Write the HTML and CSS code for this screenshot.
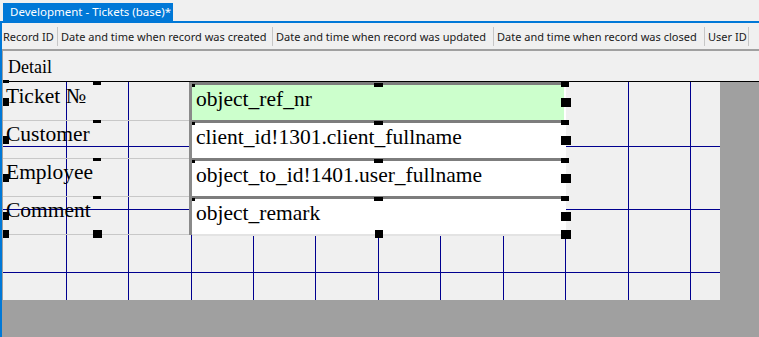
FILE: index.html
```html
<!DOCTYPE html>
<html>
<head>
<meta charset="utf-8">
<link rel="stylesheet" href="styles.css">
</head>
<body>
<div class="tabbar"><div class="tab">Development - Tickets (base)*</div></div>
<div class="window">
  <div class="colhead">
    <div class="col c1">Record ID</div>
    <div class="col c2">Date and time when record was created</div>
    <div class="col c3">Date and time when record was updated</div>
    <div class="col c4">Date and time when record was closed</div>
    <div class="col c5">User ID</div>
  </div>
  <div class="design">
    <div class="band">Detail</div>
    <div class="body">
      <div class="canvas">
        <svg class="grid" width="717" height="218" viewBox="0 0 717 218" shape-rendering="crispEdges">
          <g fill="#00008f">
            <rect x="63" y="0" width="1" height="218"/>
            <rect x="125" y="0" width="1" height="218"/>
            <rect x="188" y="0" width="1" height="218"/>
            <rect x="250" y="0" width="1" height="218"/>
            <rect x="312" y="0" width="1" height="218"/>
            <rect x="375" y="0" width="1" height="218"/>
            <rect x="437" y="0" width="1" height="218"/>
            <rect x="500" y="0" width="1" height="218"/>
            <rect x="562" y="0" width="1" height="218"/>
            <rect x="625" y="0" width="1" height="218"/>
            <rect x="687" y="0" width="1" height="218"/>
            <rect x="0" y="64" width="717" height="1"/>
            <rect x="0" y="127" width="717" height="1"/>
            <rect x="0" y="190" width="717" height="1"/>
          </g>
        </svg>
        <div class="labels">
          <div class="lbl">Ticket №<span class="hd hl"></span><span class="hd ht"></span></div>
          <div class="lbl">Customer<span class="hd hl"></span><span class="hd ht"></span></div>
          <div class="lbl">Employee<span class="hd hl"></span><span class="hd ht"></span></div>
          <div class="lbl">Comment<span class="hd hl"></span><span class="hd ht"></span></div>
          <span class="hd tl"></span>
          <span class="hd bl"></span>
          <span class="hd bm"></span>
        </div>
        <div class="fields">
          <div class="fld key">object_ref_nr<span class="hd hr"></span><span class="hd htr"></span><span class="hd htm"></span><span class="hd htl"></span></div>
          <div class="fld">client_id!1301.client_fullname<span class="hd hr"></span><span class="hd htr"></span><span class="hd htm"></span><span class="hd htl"></span></div>
          <div class="fld">object_to_id!1401.user_fullname<span class="hd hr"></span><span class="hd htr"></span><span class="hd htm"></span><span class="hd htl"></span></div>
          <div class="fld">object_remark<span class="hd hr"></span><span class="hd htr"></span><span class="hd htm"></span><span class="hd htl"></span></div>
          <span class="hd br"></span>
          <span class="hd bm"></span>
        </div>
      </div>
    </div>
  </div>
</div>
</body>
</html>
```
FILE: styles.css
```css
* { box-sizing: border-box; }
html, body { margin: 0; padding: 0; }
body {
  width: 759px;
  height: 337px;
  overflow: hidden;
  background: #f0f0f0;
  font-family: "Noto Sans", "Liberation Sans", sans-serif;
}
.tabbar { height: 21px; padding: 3px 0 0 3px; }
.tab {
  width: 170px;
  height: 18px;
  background: #0078d7;
  color: #fff;
  font-size: 11.5px;
  line-height: 18px;
  padding-left: 7px;
  white-space: nowrap;
}
.window {
  height: 316px;
  border-top: 2px solid #0078d7;
  border-left: 2px solid #0078d7;
  display: flex;
  flex-direction: column;
}
.colhead {
  height: 28px;
  padding-top: 4px;
  border-bottom: 2px solid #a0a0a0;
  display: flex;
  align-items: flex-start;
  flex: none;
}
.col {
  flex: none;
  height: 19px;
  line-height: 19px;
  font-size: 11px;
  color: #1a1a1a;
  border-right: 1px solid #c6c6c6;
  padding-left: 3px;
  white-space: nowrap;
  overflow: hidden;
}
.c1 { width: 56px; padding-left: 1px; }
.c2 { width: 215px; }
.c3 { width: 221px; }
.c4 { width: 211px; }
.c5 { width: 44px; }
.design {
  flex: 1;
  border-left: 1px solid #a0a0a0;
  display: flex;
  flex-direction: column;
}
.band {
  flex: none;
  height: 31px;
  border-bottom: 1px solid #000;
  padding: 7px 0 0 5px;
  font-family: "Liberation Serif", "Times New Roman", serif;
  font-size: 18px;
  line-height: 18px;
  color: #000;
}
.body { flex: 1; background: #a0a0a0; }
.canvas {
  position: relative;
  width: 717px;
  height: 218px;
  background: #f0f0f0;
  display: flex;
  align-items: flex-start;
}
.grid { position: absolute; left: 0; top: 0; }
.labels {
  position: relative;
  width: 189px;
  padding-top: 1px;
  border-right: 3px solid #8a8a8a;
}
.lbl {
  position: relative;
  height: 38px;
  border-bottom: 1px solid #c8c8c8;
  padding: 3px 0 0 3px;
  font-family: "Liberation Serif", "Times New Roman", serif;
  font-size: 21.5px;
  line-height: 21.5px;
  color: #000;
  white-space: nowrap;
}
.fields {
  position: relative;
  width: 374px;
  border-right: 2px solid #fff;
  border-bottom: 2px solid #e3e3e3;
}
.fld {
  position: relative;
  height: 38px;
  border-top: 3px solid #7d7d7d;
  background: #fff;
  padding: 4px 0 0 4px;
  font-family: "Liberation Serif", "Times New Roman", serif;
  font-size: 21.5px;
  line-height: 21.5px;
  color: #000;
  white-space: nowrap;
}
.fld.key { background: #ccffcc; }
.hd { position: absolute; background: #000; display: block; }
.lbl .hl { left: 0; top: 15px; width: 6px; height: 8px; }
.lbl .ht { left: 90px; top: -1px; width: 8px; height: 3px; }
.labels .tl { left: 0; top: -2px; width: 6px; height: 3px; }
.labels .bl { left: 0; top: 148px; width: 6px; height: 8px; }
.labels .bm { left: 90px; top: 148px; width: 9px; height: 8px; }
.fld .hr { left: 369px; top: 13px; width: 10px; height: 9px; }
.fld .htr { left: 369px; top: -3px; width: 8px; height: 5px; }
.fld .htm { left: 182px; top: -2px; width: 9px; height: 4px; }
.fld .htl { left: 0; top: -1px; width: 3px; height: 3px; }
.fields .br { left: 369px; top: 148px; width: 10px; height: 9px; }
.fields .bm { left: 183px; top: 148px; width: 8px; height: 8px; }
```
